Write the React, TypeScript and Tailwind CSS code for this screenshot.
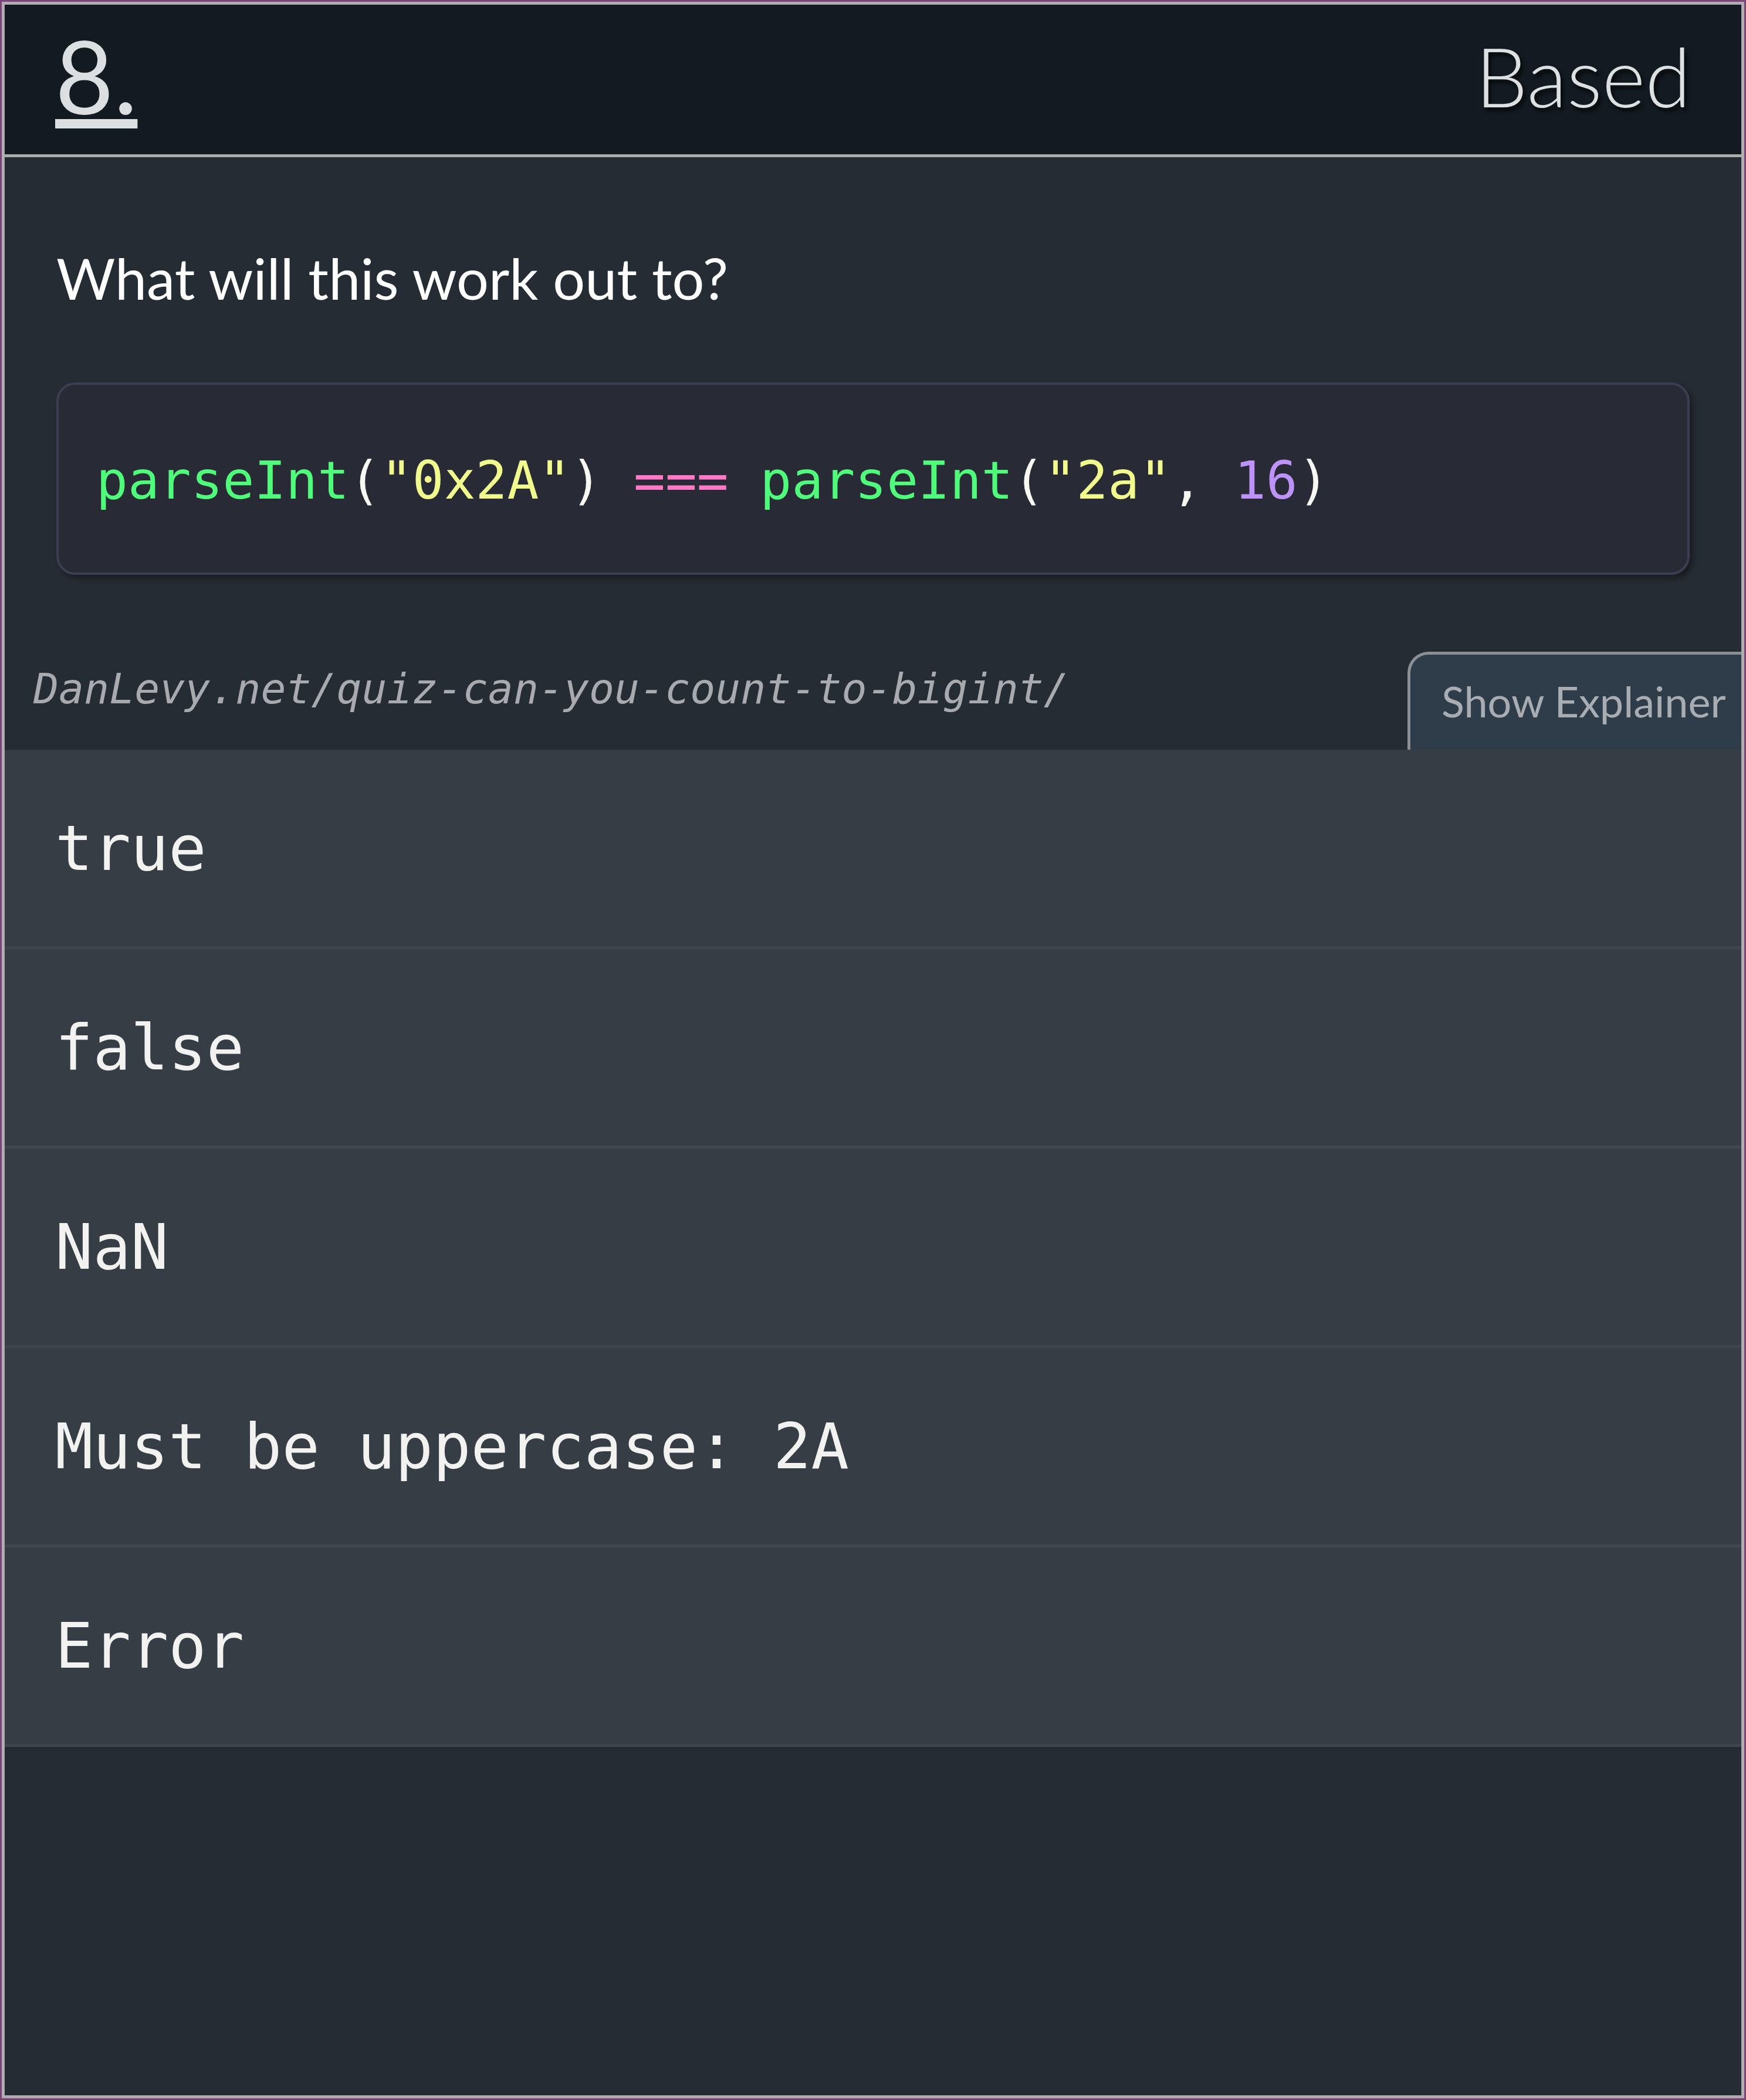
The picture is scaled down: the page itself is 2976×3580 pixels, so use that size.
export default function App() {
  const options = ["true", "false", "NaN", "Must be uppercase: 2A", "Error"];

  return (
    <div className="min-h-screen bg-[#7b4577] p-[3px]">
      <div className="flex h-[3574px] flex-col overflow-hidden border-[5px] border-[#b1acb1] bg-[#262c33]">
        {/* top bar */}
        <header className="flex h-[260px] shrink-0 items-center justify-between border-b-[5px] border-[#a9aeab] bg-[#131a21] px-[86px] pb-[14px] font-['Lato',sans-serif]">
          <a className="text-[172px] leading-none text-[#dcdfe2] underline decoration-[16px] underline-offset-[8px]">
            8.
          </a>
          <span className="text-[141px] font-light leading-none text-[#dde0e3] [text-shadow:4px_6px_6px_rgba(0,0,0,0.7)]">
            Based
          </span>
        </header>

        {/* question + code */}
        <section className="px-[88px] pt-[148px]">
          <h2 className="font-['Lato',sans-serif] text-[97px] leading-[1.2] text-white">
            What will this work out to?
          </h2>
          <div className="mt-[120px] flex h-[328px] items-center rounded-[32px] border-[4px] border-[#3b3f51] bg-[#282a36] pl-[64px] pt-[6px] shadow-[6px_6px_8px_rgba(0,0,0,0.35)]">
            <code className="whitespace-pre font-['DejaVu_Sans_Mono',monospace] text-[89.5px] text-[#f8f8f2]">
              <span className="text-[#50fa7b]">parseInt</span>(
              <span className="text-[#f1fa8c]">"0x2A"</span>){" "}
              <span className="text-[#ff79c6]">===</span>{" "}
              <span className="text-[#50fa7b]">parseInt</span>(
              <span className="text-[#f1fa8c]">"2a"</span>,{" "}
              <span className="text-[#bd93f9]">16</span>)
            </code>
          </div>
        </section>

        {/* source link + explainer tab */}
        <div className="flex h-[298px] shrink-0 items-end justify-between">
          <p className="mb-[50px] pl-[49px] font-['DejaVu_Sans_Mono',monospace] text-[71.5px] italic text-[#a9aab0]">
            DanLevy.net/quiz-can-you-count-to-bigint/
          </p>
          <button className="flex h-[167px] w-[569px] items-center rounded-tl-[36px] border-l-[5px] border-t-[5px] border-[#8a9094] bg-[#2f3d4a] pl-[53px] pb-[4px] font-['Lato',sans-serif] text-[72px] text-[#a7adb2]">
            Show Explainer
          </button>
        </div>

        {/* answers */}
        <ul className="shrink-0">
          {options.map((o) => (
            <li
              key={o}
              className="flex h-[340px] items-center whitespace-pre border-b-[5px] border-[#3f464e] bg-[#363d45] pl-[86px] font-['DejaVu_Sans_Mono',monospace] text-[107px] text-[#f2f2f0]"
            >
              {o}
            </li>
          ))}
        </ul>

        <div className="flex-1" />
      </div>
    </div>
  );
}
